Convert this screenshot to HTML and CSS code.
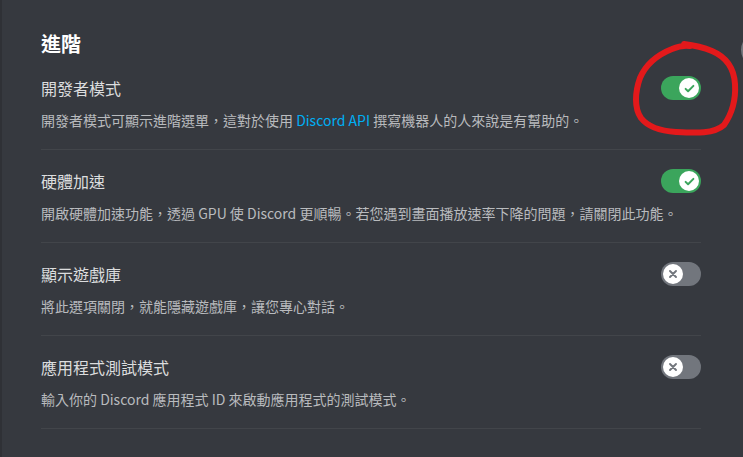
FILE: index.html
```html
<!DOCTYPE html>
<html lang="zh-Hant">
<head>
    <meta charset="UTF-8">
    <title>進階設定</title>
    <link rel="stylesheet" href="styles.css">
</head>
<body>
    <div class="page">
        <h2 class="heading">進階</h2>

        <!-- 開發者模式 -->
        <div class="row">
            <div class="row-top">
                <div class="title">開發者模式</div>
                <div class="toggle on">
                    <span class="knob">
                        <svg viewBox="0 0 20 20" width="13" height="13"><path d="M4 10.5l3.8 3.8L16 6" fill="none" stroke="#3ba55c" stroke-width="3" stroke-linecap="round" stroke-linejoin="round"/></svg>
                    </span>
                </div>
            </div>
            <div class="desc">開發者模式可顯示進階選單，這對於使用 <a class="link">Discord API</a> 撰寫機器人的人來說是有幫助的。</div>
        </div>

        <!-- 硬體加速 -->
        <div class="row">
            <div class="row-top">
                <div class="title">硬體加速</div>
                <div class="toggle on">
                    <span class="knob">
                        <svg viewBox="0 0 20 20" width="13" height="13"><path d="M4 10.5l3.8 3.8L16 6" fill="none" stroke="#3ba55c" stroke-width="3" stroke-linecap="round" stroke-linejoin="round"/></svg>
                    </span>
                </div>
            </div>
            <div class="desc">開啟硬體加速功能，透過 GPU 使 Discord 更順暢。若您遇到畫面播放速率下降的問題，請關閉此功能。</div>
        </div>

        <!-- 顯示遊戲庫 -->
        <div class="row">
            <div class="row-top">
                <div class="title">顯示遊戲庫</div>
                <div class="toggle">
                    <span class="knob">
                        <svg viewBox="0 0 20 20" width="12" height="12"><path d="M5 5l10 10M15 5L5 15" fill="none" stroke="#72767d" stroke-width="3.2" stroke-linecap="round"/></svg>
                    </span>
                </div>
            </div>
            <div class="desc">將此選項關閉，就能隱藏遊戲庫，讓您專心對話。</div>
        </div>

        <!-- 應用程式測試模式 -->
        <div class="row">
            <div class="row-top">
                <div class="title">應用程式測試模式</div>
                <div class="toggle">
                    <span class="knob">
                        <svg viewBox="0 0 20 20" width="12" height="12"><path d="M5 5l10 10M15 5L5 15" fill="none" stroke="#72767d" stroke-width="3.2" stroke-linecap="round"/></svg>
                    </span>
                </div>
            </div>
            <div class="desc">輸入你的 Discord 應用程式 ID 來啟動應用程式的測試模式。</div>
        </div>
    </div>

    <!-- close button, cut off at the window edge -->
    <div class="close"></div>

    <!-- hand drawn mark over the first toggle -->
    <svg class="scribble" width="743" height="457" viewBox="0 0 743 457">
        <path d="M684 44 C692 45 700 46 712 51 C726 57 734 68 735 84 C736 100 731 115 724 125 C714 134 696 133 676 132 C660 131 648 127 641 118 C634 108 635 92 640 78 C646 64 657 55 672 49 C679 46 684 45 690 46"
              fill="none" stroke="#e3191b" stroke-width="6" stroke-linecap="round" stroke-linejoin="round"/>
    </svg>
</body>
</html>
```

FILE: styles.css
```css
body {
    margin: 0;
    background-color: #36393f;
    font-family: "Noto Sans CJK TC", "Noto Sans", sans-serif;
    width: 743px;
    height: 457px;
    overflow: hidden;
    position: relative;
    border-left: 2px solid #2f3136;
    box-sizing: border-box;
}
.page {
    padding: 32px 0 0 39px;
    width: 660px;
}
.heading {
    margin: 0 0 20px;
    font-size: 20px;
    line-height: 24px;
    font-weight: 700;
    color: #ffffff;
}
.row {
    padding-bottom: 19px;
    margin-bottom: 19px;
    border-bottom: 1px solid #42454a;
}
.row-top {
    display: flex;
    justify-content: space-between;
    align-items: center;
    height: 24px;
}
.title {
    font-size: 16px;
    line-height: 24px;
    color: #dcddde;
}
.desc {
    margin-top: 10px;
    font-size: 14px;
    line-height: 20px;
    color: #b9bbbe;
}
.link {
    color: #00aff4;
}
.toggle {
    width: 40px;
    height: 24px;
    border-radius: 12px;
    background-color: #72767d;
    display: flex;
    align-items: center;
    padding: 0 2px;
    box-sizing: border-box;
}
.toggle.on {
    background-color: #3ba55c;
    justify-content: flex-end;
}
.knob {
    width: 20px;
    height: 20px;
    border-radius: 50%;
    background-color: #ffffff;
    display: flex;
    align-items: center;
    justify-content: center;
}
.close {
    position: absolute;
    left: 739px;
    top: 32px;
    width: 32px;
    height: 32px;
    border: 2px solid #72767d;
    border-radius: 50%;
}
.scribble {
    position: absolute;
    left: -2px;
    top: 0;
    pointer-events: none;
}
```
